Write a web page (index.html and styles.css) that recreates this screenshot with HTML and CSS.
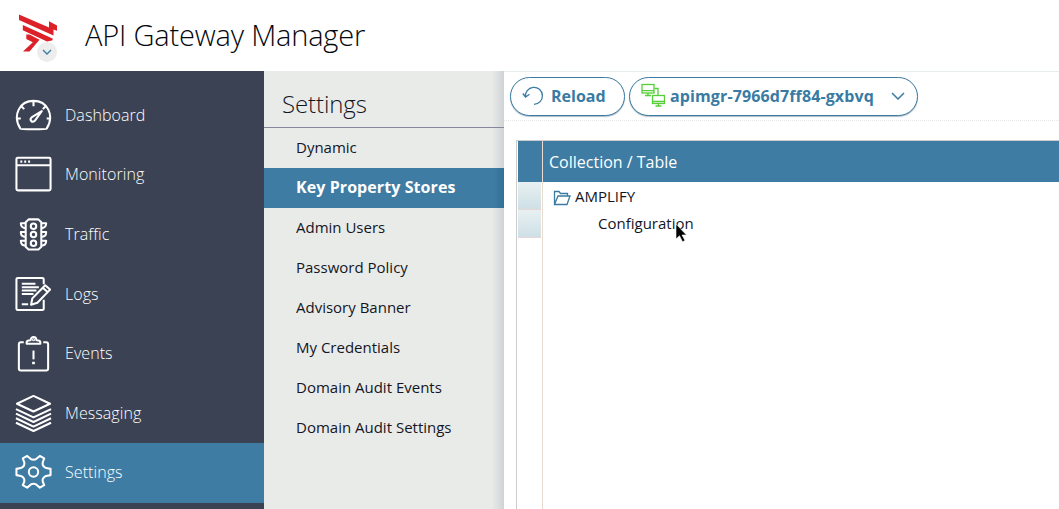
FILE: index.html
```html
<!DOCTYPE html>
<html lang="en">
<head>
<meta charset="utf-8">
<title>API Gateway Manager</title>
<link rel="stylesheet" href="styles.css">
</head>
<body>
<header class="header">
  <div class="brand">
    <svg class="logo" viewBox="0 0 60 60" width="60" height="60">
      <path fill="#dc2128" d="M9 9.500L39 22.400V16.200L47 20.500V25.800L43.500 24.600V30.500L9 15zM12.800 20L43 33.800L42 35.500L37 36.500L12.800 25.200zM16.300 29.600H19.500L29.500 34.800L19.500 46.600H13L22.800 37.300L16.300 34z"/>
    </svg>
    <span class="brand-toggle"><svg width="10" height="6" viewBox="0 0 10 6"><path d="M1 1L5 5L9 1" fill="none" stroke="#397ba3" stroke-width="1.300"/></svg></span>
  </div>
  <h1 class="title">API Gateway Manager</h1>
</header>
<div class="shell">
  <nav class="nav">
    <a class="nav-item"><svg class="icon" viewBox="0 0 40 40"><path d="M6.500 34C-2 20 6 5.500 20 5.500S42 20 33.500 34C33 34.700 7 34.700 6.500 34zM20 6v5M2.500 23.500h4.500M33.500 23.500h4M8 11.500l2.500 2.500M32 11.500l-2.500 2.500"/><path d="M28.500 16L18 22.500c-2.500 2.500.5 6 3.300 3.500z"/></svg><span>Dashboard</span></a>
    <a class="nav-item"><svg class="icon" viewBox="0 0 40 40"><rect x="2.500" y="3.300" width="35" height="33.500" rx="1.500"/><path d="M2.500 11h35"/><path d="M6.500 7.300h2M10.500 7.300h2M14.500 7.300h2"/></svg><span>Monitoring</span></a>
    <a class="nav-item"><svg class="icon" viewBox="0 0 40 40"><path d="M15 5h10l3 3v25l-3 3H15l-3-3V8z"/><circle cx="20" cy="12" r="2.800"/><circle cx="20" cy="20.500" r="2.800"/><circle cx="20" cy="29.500" r="2.800"/><path d="M12 9H7c0 3 2 5 5 5M28 9h5c0 3-2 5-5 5M12 18H7c0 3 2 5 5 5M28 18h5c0 3-2 5-5 5M12 27H7c0 3 2 5 5 5M28 27h5c0 3-2 5-5 5"/></svg><span>Traffic</span></a>
    <a class="nav-item"><svg class="icon" viewBox="0 0 40 40"><path d="M30.500 10V5q0-1.500-1.500-1.500H4q-1.500 0-1.500 1.500v30q0 1.500 1.500 1.500h25q1.500 0 1.500-1.500v-9M8 9.500h14M8 13h17.500M8 16.500h15M8 20h12M8 30.500h6.500"/><path d="M17.500 31l1.300-6.500L32 11l5 4.500L24 29zM29.500 13.500l5 4.500"/></svg><span>Logs</span></a>
    <a class="nav-item"><svg class="icon" viewBox="0 0 40 40"><path d="M10 9H7q-2 0-2 2v25q0 2 2 2h26q2 0 2-2V11q0-2-2-2h-3M13 10.500V9q0-2 4-2c0-4.500 6-4.500 6 0q4 0 4 2v1.500z"/><path d="M20 17.500v9"/><path d="M20 29v2.500" stroke-width="2.800"/><circle cx="20" cy="6.500" r=".5"/></svg><span>Events</span></a>
    <a class="nav-item"><svg class="icon" viewBox="0 0 40 40"><path d="M20 2.500L37 10.500L20 18.500L3 10.500zM2 16l18 8.500L38 16M2 20.700l18 8.500 18-8.500M2 25.400l18 8.500 18-8.500M2 30l18 8.500L38 30"/></svg><span>Messaging</span></a>
    <a class="nav-item nav-active"><svg class="icon" viewBox="0 0 40 40"><path d="M2.500 16.800L7 16Q11.500 14 10.500 10L9 6L13.500 3.500L17 6.500Q20 8.500 23 6.500L26.500 3.500L31 6L29.500 10Q28.500 14 33 16L37.500 16.800V23.200L33 24Q28.500 26 29.500 30L31 33.500L26.500 36L23 33Q20 31 17 33L13.500 36L9 33.500L10.500 30Q11.500 26 7 24L2.500 23.200z"/><circle cx="20" cy="20" r="4.800"/></svg><span>Settings</span></a>
  </nav>
  <aside class="menu">
    <h2 class="menu-title">Settings</h2>
    <a class="menu-item">Dynamic</a>
    <a class="menu-item menu-active">Key Property Stores</a>
    <a class="menu-item">Admin Users</a>
    <a class="menu-item">Password Policy</a>
    <a class="menu-item">Advisory Banner</a>
    <a class="menu-item">My Credentials</a>
    <a class="menu-item">Domain Audit Events</a>
    <a class="menu-item">Domain Audit Settings</a>
  </aside>
  <main class="content">
    <div class="toolbar">
      <button class="pill reload"><svg width="22" height="20" viewBox="0 0 22 20" fill="none" stroke="#397ba3" stroke-width="1.300"><path d="M3.500 11A8.500 8.500 0 1 1 12 18.300M.8 7.500L3.500 11L7.500 8.300"/></svg><span>Reload</span></button>
      <button class="pill instance"><svg width="24" height="24" viewBox="0 0 24 24" fill="none" stroke="#55ce38" stroke-width="1.300"><rect x="1" y="1.500" width="12" height="8.500"/><path d="M1 7.700h12M7 10v2.500M4 12.500h6M13.500 5.500H17V12"/><rect x="11.500" y="12.500" width="12" height="8"/><path d="M11.500 18.500h12M17.500 20.500v2.500M14.500 23h6"/></svg><span>apimgr-7966d7ff84-gxbvq</span><svg class="chevron" width="14" height="8" viewBox="0 0 14 8"><path d="M1 1L7 7L13 1" fill="none" stroke="#397ba3" stroke-width="1.500"/></svg></button>
    </div>
    <section class="grid">
      <div class="grid-side"><div class="side-head"></div><div class="side-cell"></div><div class="side-cell"></div></div>
      <div class="grid-main">
        <div class="grid-head">Collection / Table</div>
        <div class="row"><svg width="18" height="16" viewBox="0 0 18 16" fill="none" stroke="#397ba3" stroke-width="1.300"><path d="M1.500 14.500V1.500H6L7.500 3.500H14.500V6M1.500 14.500L5 6H17L14 14.500z"/></svg><span>AMPLIFY</span></div>
        <div class="row child"><span>Configuration</span></div>
      </div>
    </section>
  </main>
</div>
<svg class="cursor" width="13" height="20" viewBox="0 0 13 20"><path d="M1 1V16L4.500 12.800L7.500 18.800L10 17.500L7 12H11.500z" fill="#000" stroke="#fff" stroke-width=".6"/></svg>
</body>
</html>
```
FILE: styles.css
```css
* { box-sizing: border-box; }
body { margin: 0; height: 509px; overflow: hidden; background: #fff; color: #14161f; font-family: "Open Sans", sans-serif; font-size: 15px; }
.header { display: flex; height: 71px; }
.brand { position: relative; width: 85px; padding: 5px 10px; }
.logo { display: block; }
.brand-toggle { position: absolute; left: 37px; top: 42px; width: 20px; height: 20px; border-radius: 50%; background: #ededee; display: flex; align-items: center; justify-content: center; }
.title { margin: 0; font-size: 29px; font-weight: 320; letter-spacing: -.18px; line-height: 70px; color: #05070e; white-space: nowrap; }
.shell { display: flex; height: 438px; }
.nav { width: 264px; flex: none; background: #3a4254; padding-top: 14.500px; }
.nav-item { display: flex; align-items: center; height: 59.600px; padding: 0 0 1px 14px; gap: 12px; color: #fff; font-size: 16px; font-weight: 300; letter-spacing: .07px; }
.nav-active { background: #3e7ca4; }
.icon { width: 39px; height: 40px; fill: none; stroke: #fff; stroke-width: 2.100; stroke-linejoin: round; }
.menu { width: 240px; flex: none; background: linear-gradient(90deg, transparent 228px, #d0d3d6), #e9ebe9; }
.menu-title { margin: 0; height: 57px; padding: 0 0 0 18px; line-height: 66px; font-size: 24px; font-weight: 300; letter-spacing: -.1px; border-bottom: 1px solid #85879a; }
.menu-item { display: block; height: 40px; line-height: 39px; padding-left: 32px; white-space: nowrap; }
.menu-active { background: linear-gradient(90deg, transparent 230px, #336f98), #3e7ca4; color: #fff; font-size: 16px; font-weight: 700; letter-spacing: .08px; }
.content { flex: 1; min-width: 0; border-top: 1px solid #e8eded; }
.toolbar { height: 49px; padding: 5px 6px; display: flex; gap: 4px; border-bottom: 1px dotted #e7e7e7; }
.pill { height: 39px; border: 1px solid #397ba3; border-radius: 20px; background: #fff; color: #397ba3; font: 700 16px "Open Sans", sans-serif; display: flex; align-items: center; padding: 0 11px 2px; white-space: nowrap; box-shadow: 0 1px 1px #aebdc8; }
.reload { width: 115px; gap: 7px; }
.instance { width: 289px; gap: 5px; letter-spacing: .12px; }
.instance svg:first-child { margin-top: -2px; }
.chevron { margin: 0 1px 0 auto; }
.grid { display: flex; margin: 19px 0 0 12px; height: 369px; border: solid #ccc; border-width: 1px 0 0 1px; padding-left: 1px; }
.grid-side { width: 25px; flex: none; border-right: 1px solid #eadbd0; }
.side-head { height: 41px; background: #3e7ca4; }
.side-cell { width: 23px; height: 28px; background: linear-gradient(#e8f0f1, #cee0e6); border-bottom: 1px solid #e8d8d5; }
.grid-main { flex: 1; }
.grid-head { height: 41px; line-height: 43px; padding-left: 6px; background: #3e7ca4; color: #fff; font-size: 16px; }
.row { display: flex; align-items: center; height: 27px; padding: 1px 0 0 10px; gap: 4px; }
.row svg { margin-top: 4px; }
.child { padding: 0 0 0 55px; }
.cursor { position: absolute; left: 675px; top: 223px; }
```
